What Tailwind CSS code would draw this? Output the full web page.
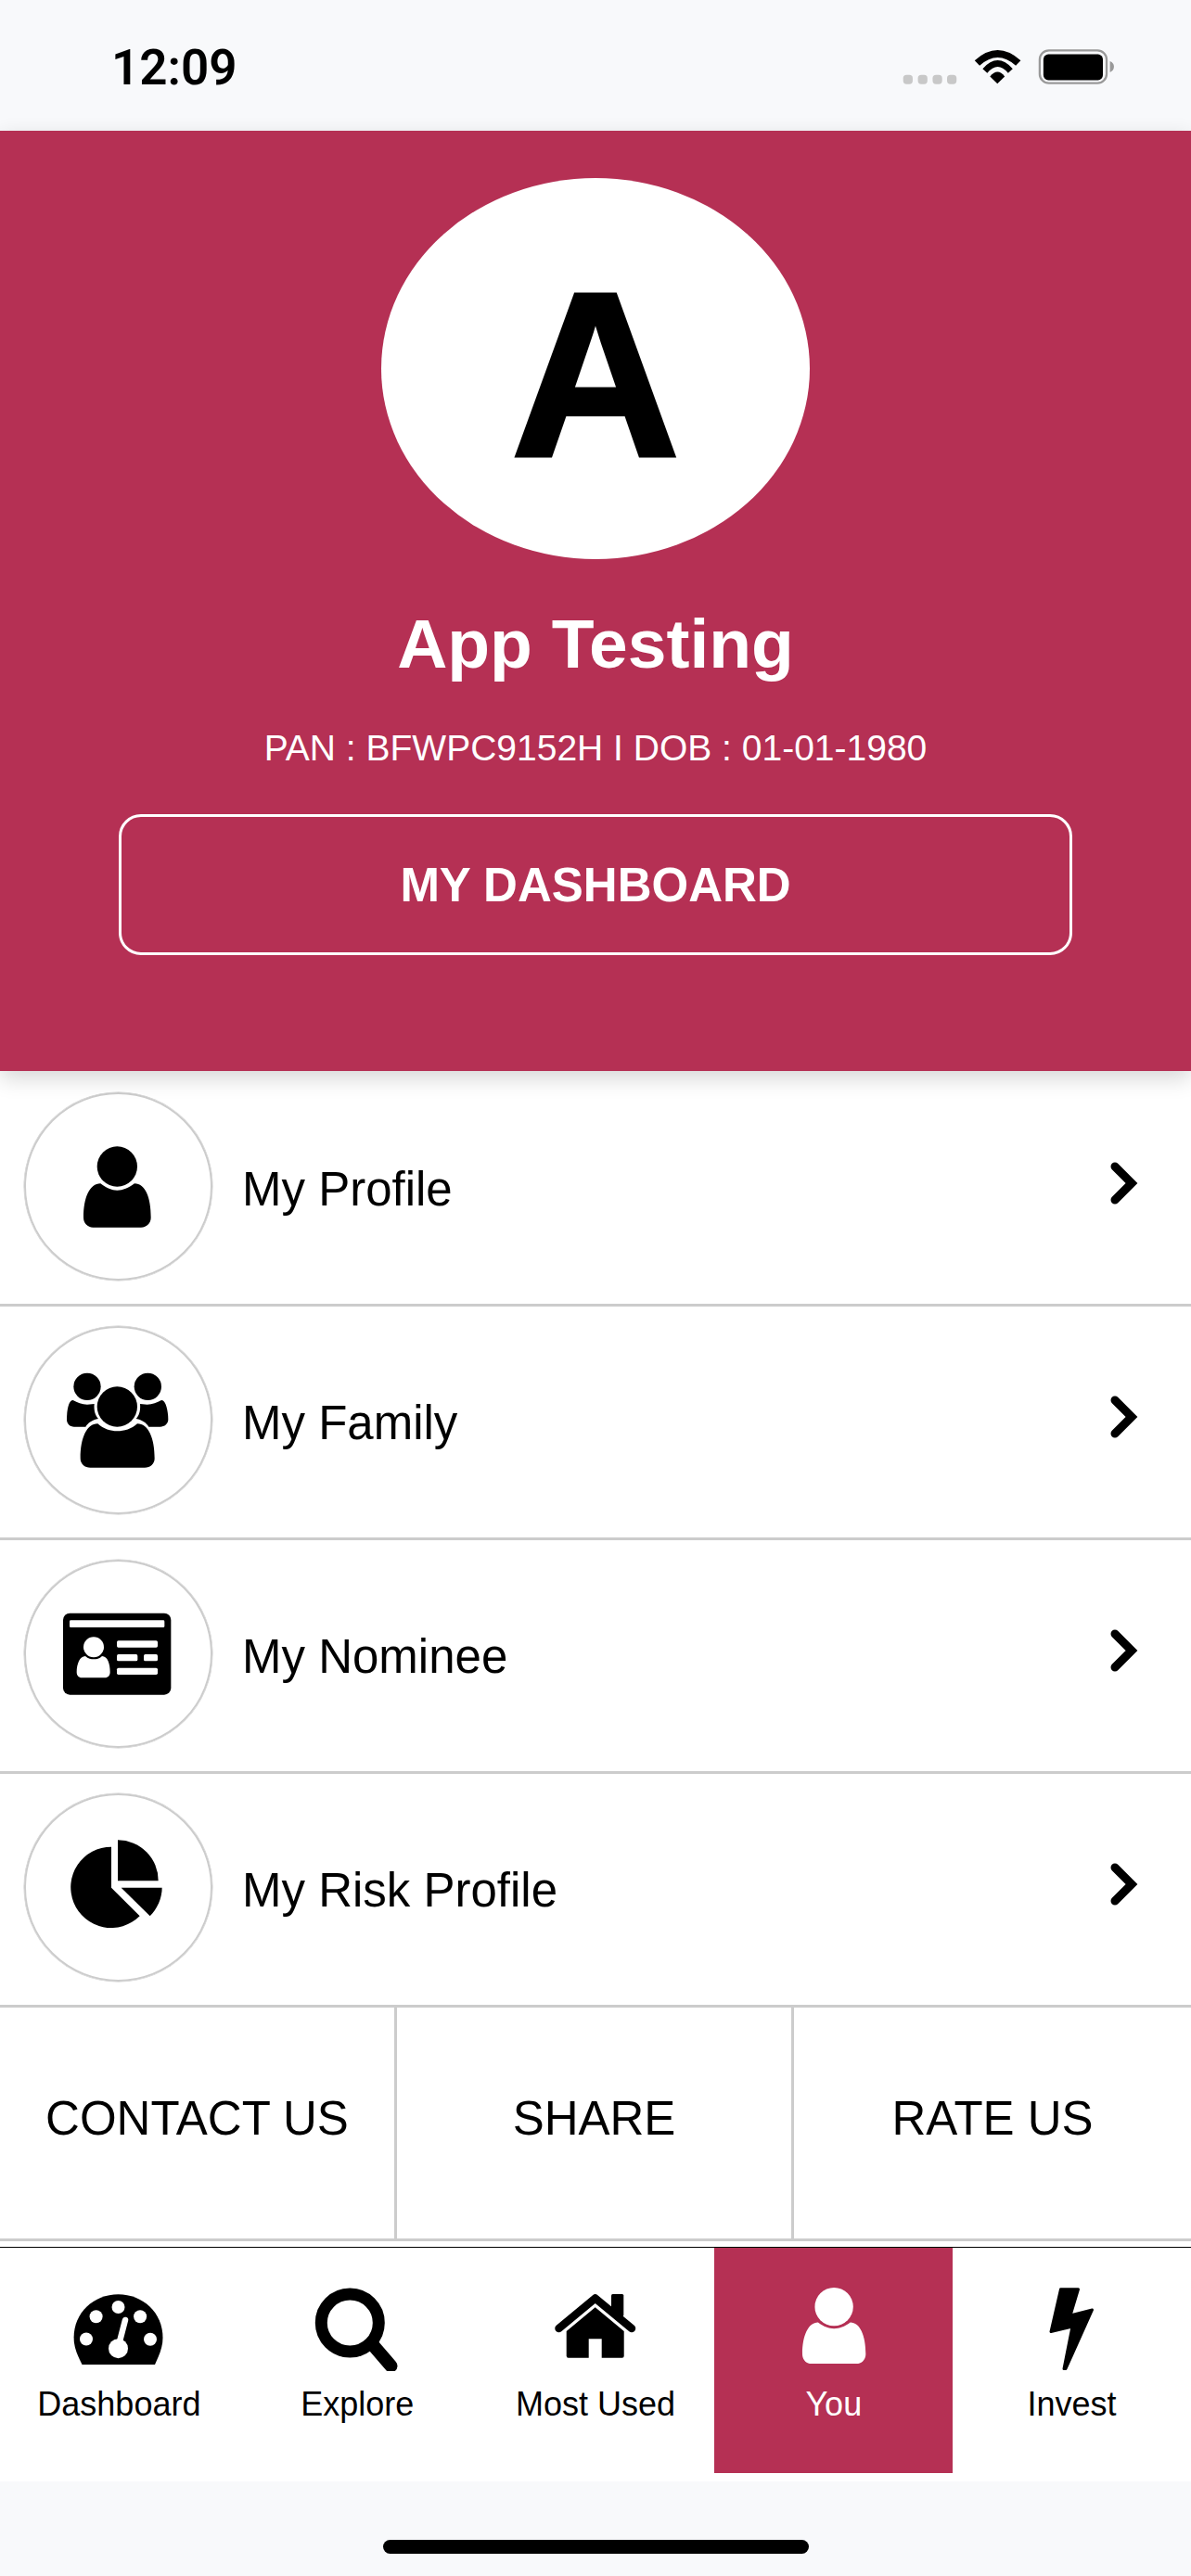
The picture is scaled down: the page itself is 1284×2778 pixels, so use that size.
<!DOCTYPE html>
<html lang="en">
<head>
    <meta charset="UTF-8">
    <meta name="viewport" content="width=device-width, initial-scale=1.0">
    <title>You</title>
    <script src="https://cdn.jsdelivr.net/npm/@tailwindcss/browser@4"></script>
</head>
<body class="bg-white font-['Liberation_Sans',Arial,sans-serif] text-black overflow-hidden">

    <!-- Status bar -->
    <div class="h-[141px] bg-[#f8f9fb] flex justify-between pl-[120px] pr-[81px]">
        <span class="font-['Roboto',sans-serif] font-semibold text-[53px] leading-none mt-[47px] h-[53px]">12:09</span>
        <svg class="mt-[50px]" width="233" height="43" viewBox="90 30 700 130">
            <rect x="99" y="123" width="31" height="30" rx="11" fill="#c8c8c8"/>
            <rect x="147" y="123" width="31" height="30" rx="11" fill="#c8c8c8"/>
            <rect x="195" y="123" width="31" height="30" rx="11" fill="#c8c8c8"/>
            <rect x="242" y="123" width="31" height="30" rx="11" fill="#c8c8c8"/>
            <path d="M332 76Q407 8 482 76L466 93Q407 40 348 93Z"/>
            <path d="M358 103Q407 48 456 103L441 117Q407 76 373 117Z"/>
            <path d="M382 128Q407 98 430 128L406 152Z"/>
            <rect x="544" y="43" width="218" height="107" rx="30" fill="none" stroke="#999" stroke-width="7"/>
            <rect x="556" y="56" width="194" height="84" rx="16"/>
            <path d="M773 78C782 82 786 88 786 96C786 104 782 111 773 115Z" fill="#999"/>
        </svg>
    </div>

    <!-- Profile header -->
    <section class="relative z-10 h-[1014px] bg-[#b53054] flex flex-col items-center pt-[51px] shadow-[0_8px_22px_rgba(0,0,0,0.16)]">
        <div class="w-[462px] h-[411px] rounded-[50%] bg-white flex items-center justify-center">
            <span class="font-bold text-[252px] leading-none mt-[12px] [-webkit-text-stroke:4px_black]">A</span>
        </div>
        <h1 class="mt-[50px] text-white font-bold text-[75px] leading-[82px]">App Testing</h1>
        <p class="mt-[50px] text-white text-[39px] leading-[44px]">PAN : BFWPC9152H I DOB : 01-01-1980</p>
        <button class="mt-[49px] w-[1028px] h-[152px] rounded-[24px] border-[3px] border-white text-white font-bold text-[51px] pt-[2px]">MY DASHBOARD</button>
    </section>

    <!-- Menu -->
    <main class="pt-[2px]">
        <div class="h-[252px] border-b-[3px] border-[#ccc] pt-[21px] pl-[26px] pr-[57px]">
            <div class="flex items-center h-[203px]">
                <div class="w-[203px] h-[203px] rounded-full border-2 border-[#ccc] shadow-[0_0_0_0.5px_#ccc]">
                    <svg width="199" height="199" viewBox="84 91 597 597">
                        <circle cx="379" cy="325" r="65"/>
                        <path d="M325 380C345 395 360 402 379 402C398 402 415 395 435 380C470 380 488 425 488 490C488 508 475 522 456 522H301C283 522 270 508 270 490C270 425 290 380 325 380Z"/>
                    </svg>
                </div>
                <span class="ml-[32px] mt-[7px] flex-1 text-[51px]">My Profile</span>
                <svg class="-mt-[7px]" width="30" height="46" viewBox="0 0 30 46"><path d="M5 5L23 23L5 41" fill="none" stroke="#000" stroke-width="9" stroke-linecap="round"/></svg>
            </div>
        </div>
        <div class="h-[252px] border-b-[3px] border-[#ccc] pt-[21px] pl-[26px] pr-[57px]">
            <div class="flex items-center h-[203px]">
                <div class="w-[203px] h-[203px] rounded-full border-2 border-[#ccc] shadow-[0_0_0_0.5px_#ccc]">
                    <svg width="199" height="199" viewBox="84 848 597 597">
                        <circle cx="282" cy="1038" r="44"/>
                        <circle cx="478" cy="1038" r="44"/>
                        <path d="M236 1082C250 1090 265 1096 282 1096L305 1094C303 1115 308 1132 318 1142C298 1146 285 1155 277 1168H240C226 1168 216 1158 216 1145C216 1115 222 1082 236 1082Z"/>
                        <path d="M522 1082C508 1090 493 1096 476 1096L453 1094C455 1115 450 1132 440 1142C460 1146 473 1155 481 1168H518C532 1168 544 1158 544 1145C544 1115 536 1082 522 1082Z"/>
                        <circle cx="379" cy="1103" r="65"/>
                        <path d="M316 1158C335 1175 358 1182 379 1182C402 1182 425 1175 444 1158C480 1158 500 1205 500 1270C500 1288 486 1300 468 1300H292C274 1300 260 1288 260 1270C260 1205 280 1158 316 1158Z"/>
                    </svg>
                </div>
                <span class="ml-[32px] mt-[7px] flex-1 text-[51px]">My Family</span>
                <svg class="-mt-[7px]" width="30" height="46" viewBox="0 0 30 46"><path d="M5 5L23 23L5 41" fill="none" stroke="#000" stroke-width="9" stroke-linecap="round"/></svg>
            </div>
        </div>
        <div class="h-[252px] border-b-[3px] border-[#ccc] pt-[21px] pl-[26px] pr-[57px]">
            <div class="flex items-center h-[203px]">
                <div class="w-[203px] h-[203px] rounded-full border-2 border-[#ccc] shadow-[0_0_0_0.5px_#ccc]">
                    <svg width="199" height="199" viewBox="84 74 597 597">
                        <rect x="204" y="241" width="349" height="264" rx="22"/>
                        <rect x="225" y="264" width="307" height="23" rx="4" fill="#fff"/>
                        <circle cx="303" cy="351" r="33" fill="#fff"/>
                        <path d="M276 380C285 388 295 390 303 390C312 390 322 388 330 380C348 380 356 405 356 432C356 443 349 450 340 450H264C255 450 248 443 248 432C248 405 258 380 276 380Z" fill="#fff"/>
                        <rect x="378" y="330" width="132" height="22" rx="5" fill="#fff"/>
                        <rect x="378" y="374" width="67" height="22" rx="5" fill="#fff"/>
                        <rect x="465" y="374" width="45" height="22" rx="5" fill="#fff"/>
                        <rect x="378" y="418" width="132" height="22" rx="5" fill="#fff"/>
                    </svg>
                </div>
                <span class="ml-[32px] mt-[7px] flex-1 text-[51px]">My Nominee</span>
                <svg class="-mt-[7px]" width="30" height="46" viewBox="0 0 30 46"><path d="M5 5L23 23L5 41" fill="none" stroke="#000" stroke-width="9" stroke-linecap="round"/></svg>
            </div>
        </div>
        <div class="h-[252px] border-b-[3px] border-[#ccc] pt-[21px] pl-[26px] pr-[57px]">
            <div class="flex items-center h-[203px]">
                <div class="w-[203px] h-[203px] rounded-full border-2 border-[#ccc] shadow-[0_0_0_0.5px_#ccc]">
                    <svg width="199" height="199" viewBox="84 831 597 597">
                        <path d="M360 998V1130L452 1222A131 131 0 1 1 360 998Z"/>
                        <path d="M381 976A131 131 0 0 1 512 1108H381Z"/>
                        <path d="M392 1130H524C524 1165 508 1198 485 1222Z"/>
                    </svg>
                </div>
                <span class="ml-[32px] mt-[7px] flex-1 text-[51px]">My Risk Profile</span>
                <svg class="-mt-[7px]" width="30" height="46" viewBox="0 0 30 46"><path d="M5 5L23 23L5 41" fill="none" stroke="#000" stroke-width="9" stroke-linecap="round"/></svg>
            </div>
        </div>

        <!-- Contact / share / rate -->
        <div class="grid grid-cols-3 h-[252px] border-b-[3px] border-[#ccc] text-[51px]">
            <div class="border-r-[3px] border-[#ccc] flex items-center justify-center pb-[8px]">CONTACT US</div>
            <div class="border-r-[3px] border-[#ccc] flex items-center justify-center pb-[8px]">SHARE</div>
            <div class="flex items-center justify-center pb-[8px]">RATE US</div>
        </div>
    </main>

    <!-- Tab bar -->
    <nav class="mt-[6px] h-[253px] border-t border-black grid grid-cols-5 text-[36px] leading-[40px]">
        <div class="h-[243px] flex flex-col items-center pt-[43px]">
            <svg width="100" height="90" viewBox="0 0 100 90">
                <path d="M10.500 83C5 72 1.600 64 1.600 54C1.600 27 23 7.300 49.500 7.300C76 7.300 97.500 27 97.500 54C97.500 64 94 72 89 83Z"/>
                <g fill="#fff">
                    <circle cx="15" cy="55.500" r="7"/>
                    <circle cx="25.600" cy="31.300" r="7"/>
                    <circle cx="49.500" cy="21" r="7"/>
                    <circle cx="73.100" cy="31.300" r="7"/>
                    <circle cx="84" cy="55.700" r="7"/>
                    <circle cx="49.500" cy="65.700" r="10.500"/>
                </g>
                <path d="M50 62L57 35" stroke="#fff" stroke-width="6.500" stroke-linecap="round"/>
            </svg>
            <span class="mt-[16px]">Dashboard</span>
        </div>
        <div class="h-[243px] flex flex-col items-center pt-[43px]">
            <svg width="100" height="90" viewBox="0 0 100 90">
                <circle cx="42.300" cy="38" r="31" fill="none" stroke="#000" stroke-width="13"/>
                <path d="M68 63L86.500 84.500" stroke="#000" stroke-width="14" stroke-linecap="round"/>
            </svg>
            <span class="mt-[16px]">Explore</span>
        </div>
        <div class="h-[243px] flex flex-col items-center pt-[43px]">
            <svg width="100" height="90" viewBox="0 0 100 90">
                <rect x="67" y="7" width="13.300" height="24" rx="1.500"/>
                <path d="M10.500 44L49.700 11.500L89 44" fill="none" stroke="#000" stroke-width="8.500" stroke-linecap="round" stroke-linejoin="round"/>
                <path d="M49.700 21.300L80.700 47V73.700Q80.700 75.700 78.700 75.700H56.700V55.300H42.700V75.700H20.700Q18.700 75.700 18.700 73.700V47Z"/>
            </svg>
            <span class="mt-[16px]">Most Used</span>
        </div>
        <div class="h-[243px] bg-[#b53054] text-white flex flex-col items-center pt-[43px]">
            <svg width="100" height="90" viewBox="-8 0 100 90" fill="#fff">
                <g transform="scale(0.94)">
                    <circle cx="44.800" cy="22" r="22"/>
                    <path d="M18 40C25 45 30 47 36.300 47C43 47 48 45 55 40C66 40 72.700 55 72.700 76C72.700 83 68 87.300 62 87.300H10.500C4.500 87.300 0 83 0 76C0 55 7 40 18 40Z" transform="translate(8.500 0)"/>
                </g>
            </svg>
            <span class="mt-[16px]">You</span>
        </div>
        <div class="h-[243px] flex flex-col items-center pt-[43px]">
            <svg width="100" height="90" viewBox="0 0 100 90">
                <path d="M37.500 1.800H56.500L48 30L71.500 24L43 87.500H41L50 42L27 47.500Z" stroke="#000" stroke-width="3" stroke-linejoin="round"/>
            </svg>
            <span class="mt-[16px]">Invest</span>
        </div>
    </nav>

    <!-- Home indicator -->
    <div class="h-[102px] bg-[#f8f9fb] flex justify-center pt-[63px]">
        <div class="w-[459px] h-[15px] rounded-full bg-black"></div>
    </div>
</body>
</html>
